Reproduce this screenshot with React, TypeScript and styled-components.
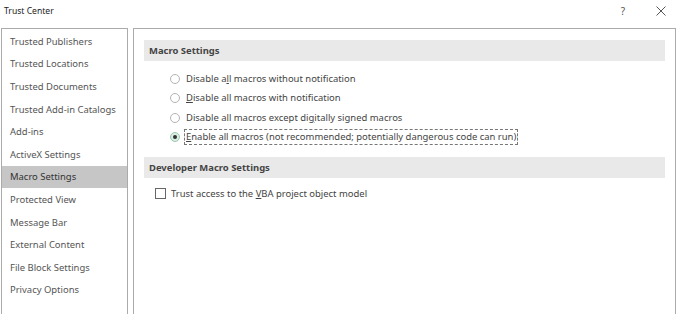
import React from "react";
import styled, { createGlobalStyle } from "styled-components";

const Global = createGlobalStyle`
  html, body { margin: 0; padding: 0; background: #ffffff; }
  body { width: 680px; height: 314px; overflow: hidden; font-family: "Noto Sans", "Open Sans", sans-serif; }
  * { box-sizing: border-box; }
`;

const Window = styled.div`
  width: 680px;
  height: 314px;
  display: flex;
  flex-direction: column;
  background: #fff;
  color: #444;
  font-size: 9.45px;
`;

const TitleBar = styled.div`
  height: 28px;
  display: flex;
  align-items: flex-start;
  padding: 4px 9px 0 4px;
`;

const Title = styled.div`
  flex: 1;
  font-size: 8.6px;
  color: #222;
  line-height: 14px;
`;

const TitleButton = styled.div<{ $w: number; $mr?: number }>`
  width: ${(p) => p.$w}px;
  margin-right: ${(p) => p.$mr ?? 0}px;
  height: 14px;
  display: flex;
  align-items: center;
  justify-content: center;
  color: #555;
  font-size: 10px;
`;

const Body = styled.div`
  flex: 1;
  display: flex;
  gap: 5px;
  padding-left: 1px;
  padding-right: 4px;
  min-height: 0;
`;

const Nav = styled.div`
  width: 127px;
  border: 1px solid #ababab;
  border-bottom: none;
  padding-top: 1px;
  display: flex;
  flex-direction: column;
`;

const NavItem = styled.div<{ $active?: boolean }>`
  height: 22.6px;
  display: flex;
  align-items: center;
  padding-left: 8px;
  white-space: nowrap;
  color: ${(p) => (p.$active ? "#333" : "#555")};
  background: ${(p) => (p.$active ? "#c6c6c6" : "transparent")};
`;

const Panel = styled.div`
  flex: 1;
  border: 1px solid #ababab;
  border-bottom: none;
  padding: 11px 10px 0 10px;
  display: flex;
  flex-direction: column;
`;

const SectionHeader = styled.div`
  height: 21px;
  background: #e9e9e9;
  display: flex;
  align-items: center;
  padding-left: 5px;
  font-weight: bold;
  color: #444;
`;

const OptionList = styled.div<{ $mt: number; $mb: number; $indent: number }>`
  display: flex;
  flex-direction: column;
  margin: ${(p) => p.$mt}px 0 ${(p) => p.$mb}px ${(p) => p.$indent}px;
`;

const Row = styled.div`
  height: 19.5px;
  display: flex;
  align-items: center;
  white-space: nowrap;
`;

const Radio = styled.span<{ $checked?: boolean }>`
  width: 10px;
  height: 10px;
  border-radius: 50%;
  border: 1px solid ${(p) => (p.$checked ? "#9fc9b2" : "#b3b3b3")};
  background: ${(p) => (p.$checked ? "#d9eee2" : "#fff")};
  display: inline-flex;
  align-items: center;
  justify-content: center;
  margin-right: 6px;
  flex: none;
  &::after {
    content: "";
    width: 4px;
    height: 4px;
    border-radius: 50%;
    background: ${(p) => (p.$checked ? "#333" : "transparent")};
  }
`;

const Check = styled.span`
  width: 11px;
  height: 11px;
  border: 1px solid #666;
  background: #fff;
  margin-right: 5px;
  flex: none;
`;

const Label = styled.span<{ $focus?: boolean }>`
  color: #444;
  padding: 0 1px;
  line-height: 14px;
  border: 1px ${(p) => (p.$focus ? "dashed #777" : "solid transparent")};
  margin-left: -2px;
`;

const Key = styled.span`
  text-decoration: underline;
`;

export default function App() {
  const nav = [
    "Trusted Publishers",
    "Trusted Locations",
    "Trusted Documents",
    "Trusted Add-in Catalogs",
    "Add-ins",
    "ActiveX Settings",
    "Macro Settings",
    "Protected View",
    "Message Bar",
    "External Content",
    "File Block Settings",
    "Privacy Options",
  ];
  return (
    <Window>
      <Global />
      <TitleBar>
        <Title>Trust Center</Title>
        <TitleButton $w={12} $mr={22}>?</TitleButton>
        <TitleButton $w={20}>
          <svg width="10" height="10" viewBox="0 0 10 10">
            <path d="M0.5 0.5 L9.5 9.5 M9.5 0.5 L0.5 9.5" stroke="#555" strokeWidth="1" fill="none" />
          </svg>
        </TitleButton>
      </TitleBar>
      <Body>
        <Nav>
          {nav.map((n) => (
            <NavItem key={n} $active={n === "Macro Settings"}>
              {n}
            </NavItem>
          ))}
        </Nav>
        <Panel>
          <SectionHeader>Macro Settings</SectionHeader>
          <OptionList $mt={8} $mb={10} $indent={26}>
            <Row>
              <Radio />
              <Label>
                Disable a<Key>l</Key>l macros without notification
              </Label>
            </Row>
            <Row>
              <Radio />
              <Label>
                <Key>D</Key>isable all macros with notification
              </Label>
            </Row>
            <Row>
              <Radio />
              <Label>
                Disable all macros except di<Key>g</Key>itally signed macros
              </Label>
            </Row>
            <Row>
              <Radio $checked />
              <Label $focus>
                <Key>E</Key>nable all macros (not recommended; potentially dangerous code can run)
              </Label>
            </Row>
          </OptionList>
          <SectionHeader>Developer Macro Settings</SectionHeader>
          <OptionList $mt={6} $mb={0} $indent={11}>
            <Row>
              <Check />
              <Label>
                Trust access to the <Key>V</Key>BA project object model
              </Label>
            </Row>
          </OptionList>
        </Panel>
      </Body>
    </Window>
  );
}
